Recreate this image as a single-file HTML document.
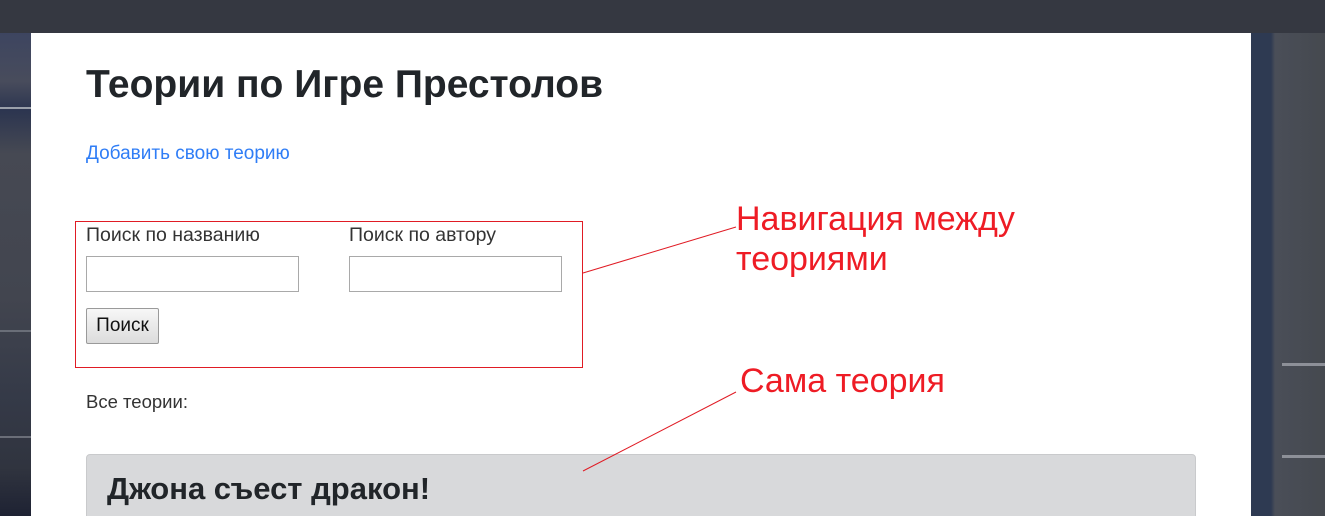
<!DOCTYPE html>
<html><head><meta charset="utf-8"><style>
html,body{margin:0;width:1325px;height:516px;overflow:hidden;}
body{position:relative;font-family:"Liberation Sans","Noto Sans CJK SC",sans-serif;background:#3a4250;}
.top{position:absolute;left:0;top:0;width:1325px;height:33px;background:#353841;}
.bgl{position:absolute;left:0;top:33px;width:31px;height:483px;background:linear-gradient(180deg,#3d4560 0%,#484c5c 10%,#2c3550 16%,#464953 25%,#42454f 55%,#353a48 75%,#30343f 90%,#1e2233 100%);}
.bgr{position:absolute;left:1251px;top:33px;width:74px;height:483px;background:linear-gradient(90deg,#2e3a52 0px,#2e3a52 20px,#4a4e58 24px,#45494f 74px);}
.stripe{position:absolute;height:3px;background:#8d9098;}
.main{position:absolute;left:31px;top:33px;width:1220px;height:483px;background:#fff;overflow:hidden;}
h1{position:absolute;left:55px;top:30px;margin:0;font-size:39px;font-weight:bold;color:#212529;}
a{position:absolute;left:55px;top:110px;color:#2f7df6;font-size:19px;text-decoration:none;}
.box{position:absolute;left:44px;top:188px;width:506px;height:145px;border:1px solid #e01b24;}
.lab{position:absolute;font-size:19.5px;color:#333;}
.inp{position:absolute;width:213px;height:36px;border:1px solid #a9a9a9;box-sizing:border-box;}
.btn{position:absolute;left:55px;top:275px;width:73px;height:36px;border:1px solid #9a9a9a;border-radius:2px;background:linear-gradient(#f7f7f7,#dcdcdc);box-sizing:border-box;font-size:19px;color:#111;text-align:center;line-height:34px;}
.all{position:absolute;left:55px;top:358px;font-size:18.5px;color:#333;}
.card{position:absolute;left:55px;top:421px;width:1110px;height:80px;box-sizing:border-box;background:#d8d9db;border:1px solid #c9cacc;border-radius:4px;}
.card h2{margin:0;position:absolute;left:20px;top:16px;font-size:31px;color:#212529;font-weight:bold;}
.ann{position:absolute;color:#ee1c25;font-size:34px;line-height:40px;font-family:"Liberation Sans",sans-serif;}
</style></head><body>
<div class="top"></div>
<div class="bgl"></div>
<div class="stripe" style="left:0;top:107px;width:31px;height:2px;background:#9aa0aa"></div>
<div class="stripe" style="left:0;top:330px;width:31px;height:2px;background:#6a6e78"></div>
<div class="stripe" style="left:0;top:436px;width:31px;height:2px;background:#6a6e78"></div>
<div class="bgr"></div>
<div class="stripe" style="left:1282px;top:363px;width:43px"></div>
<div class="stripe" style="left:1282px;top:455px;width:43px"></div>
<div class="main">
<h1>Теории по Игре Престолов</h1>
<a>Добавить свою теорию</a>
<div class="box"></div>
<div class="lab" style="left:55px;top:191px">Поиск по названию</div>
<div class="lab" style="left:318px;top:191px">Поиск по автору</div>
<div class="inp" style="left:55px;top:223px"></div>
<div class="inp" style="left:318px;top:223px"></div>
<div class="btn">Поиск</div>
<div class="all">Все теории:</div>
<div class="card"><h2>Джона съест дракон!</h2></div>
</div>
<svg style="position:absolute;left:0;top:0" width="1325" height="516"><line x1="583" y1="273" x2="736" y2="227" stroke="#e01b24" stroke-width="1"/><line x1="583" y1="471" x2="736" y2="392" stroke="#e01b24" stroke-width="1"/></svg>
<div class="ann" style="left:736px;top:199px">Навигация между<br>теориями</div>
<div class="ann" style="left:740px;top:361px">Сама теория</div>
</body></html>
